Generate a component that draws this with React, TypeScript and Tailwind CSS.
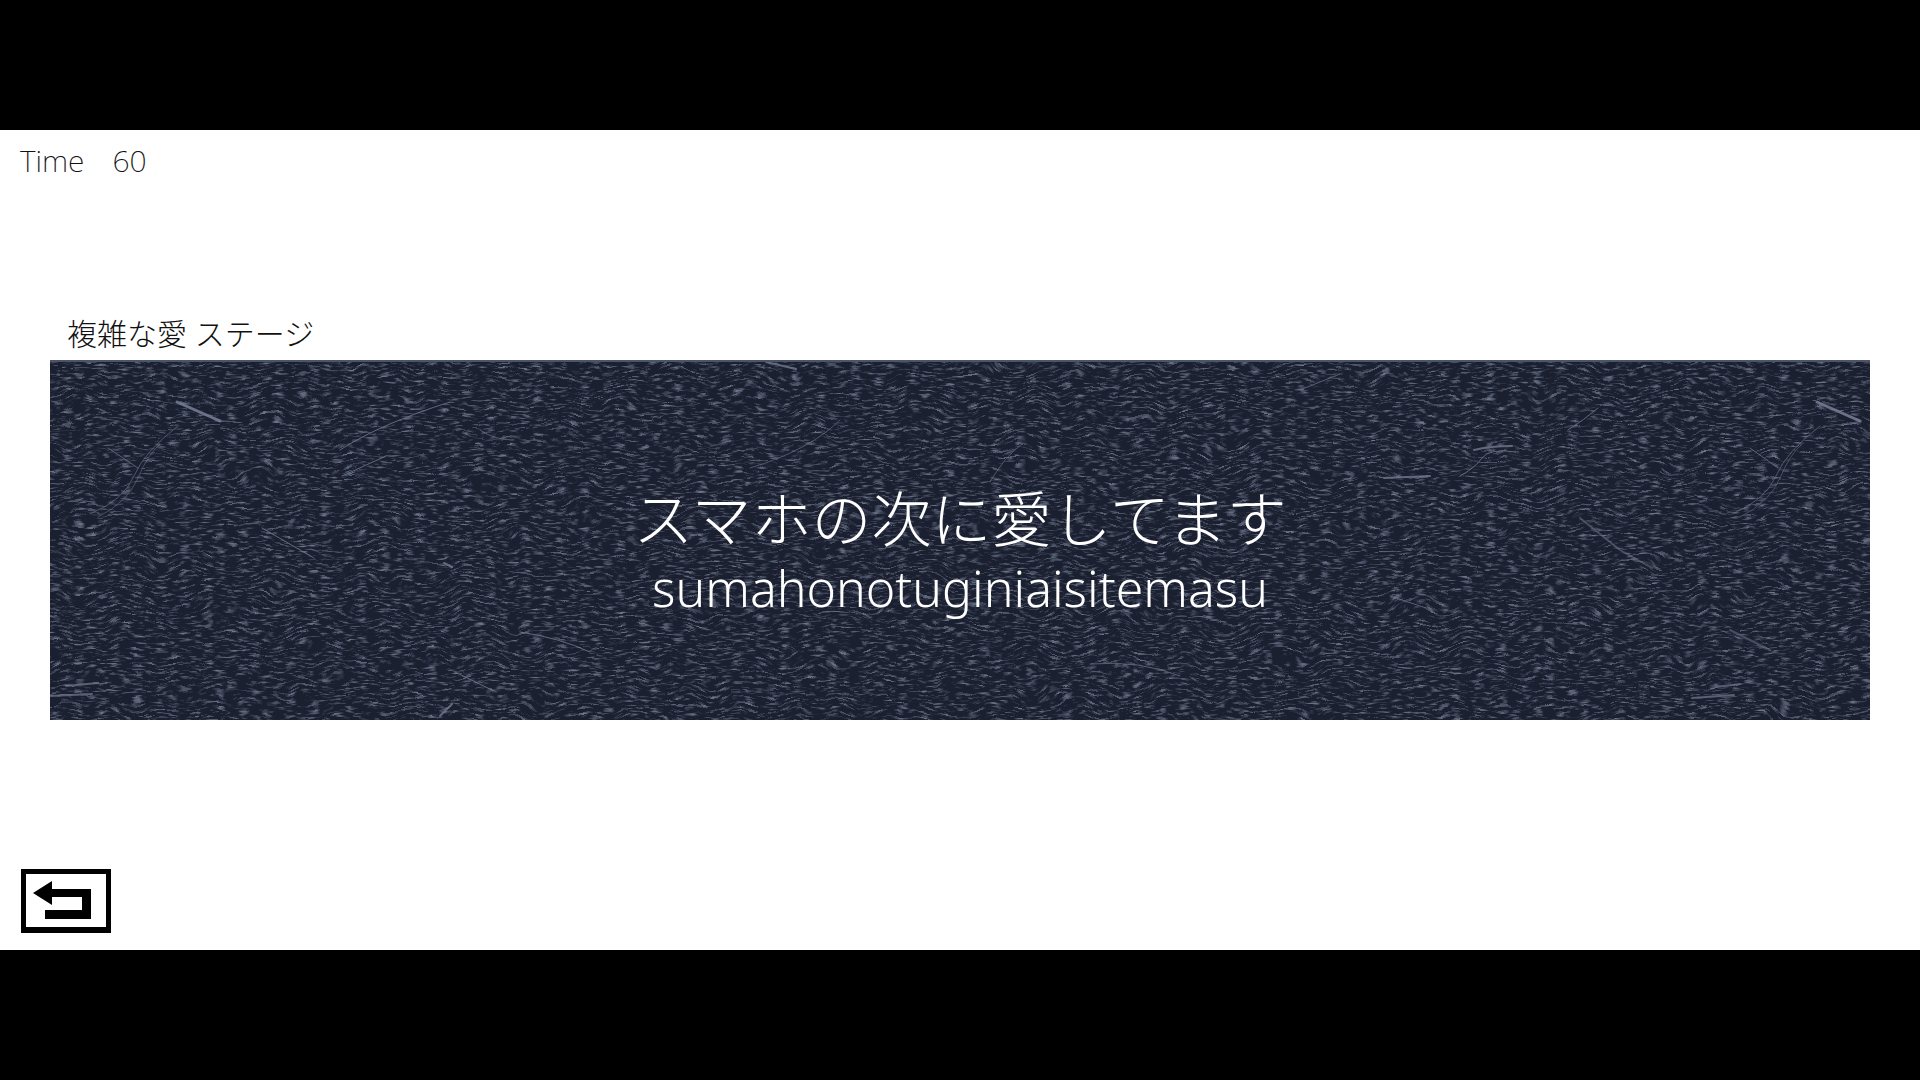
const FIBERS = [
  { d: "M127 42 L170 61 M1767 42 L1810 61", width: 3, opacity: 0.9 },
  { d: "M40 154 Q74 140 84 116 T128 66 M1682 154 Q1716 140 1726 116 T1770 66", width: 1, opacity: 0.6 },
  { d: "M48 157 Q78 142 88 118 T110 84 M1690 157 Q1720 142 1730 118 T1752 84", width: 1, opacity: 0.5 },
  { d: "M58 88 L88 108 M1700 88 L1728 108", width: 1, opacity: 0.7 },
  { d: "M290 90 Q330 64 400 42 M292 116 L336 96", width: 1, opacity: 0.8 },
  { d: "M1334 118 L1380 116 M1424 90 Q1440 86 1462 86", width: 2, opacity: 0.8 },
  { d: "M1410 116 Q1425 108 1432 98 T1466 92 M1518 70 Q1534 60 1548 48", width: 1, opacity: 0.8 },
  { d: "M1530 158 L1570 190 M1570 190 L1602 208 M1680 270 L1720 290", width: 2, opacity: 0.5 },
  { d: "M212 168 L264 198 M470 272 Q510 278 540 292 M405 312 L446 332", width: 1, opacity: 0.8 },
  { d: "M0 336 L42 334 M16 326 L48 323 M1642 338 L1684 335 M1666 327 L1690 324", width: 2, opacity: 0.7 },
  { d: "M390 356 L402 344 M394 203 L402 207 M716 2 L746 9", width: 2, opacity: 0.8 },
  { d: "M940 122 Q955 96 972 84 M790 60 Q760 90 700 108 M430 70 Q444 80 464 80", width: 1, opacity: 0.6 },
  { d: "M1040 304 Q1090 300 1130 316 M1340 236 L1376 248 M1250 30 L1290 14", width: 1, opacity: 0.7 },
];

function PaperTexture() {
  return (
    <svg className="absolute inset-0 h-full w-full" aria-hidden="true">
      <filter id="paper" x="0" y="0" width="100%" height="100%" colorInterpolationFilters="sRGB">
        <feTurbulence type="fractalNoise" baseFrequency="0.085 0.46" numOctaves={2} seed={4} result="grain" />
        <feTurbulence type="fractalNoise" baseFrequency="0.02 0.024" numOctaves={2} seed={11} />
        <feColorMatrix values="0 0 0 0 0.5  0 1 0 0 0  0 0 0 0 0.5  0 0 0 0 1" result="wave" />
        <feDisplacementMap in="grain" in2="wave" scale={24} xChannelSelector="R" yChannelSelector="G" result="bent" />
        <feColorMatrix in="bent" values="0 0 0 0 0.42  0 0 0 0 0.46  0 0 0 0 0.54  3 0 0 0 -1.5" />
      </filter>
      <rect y="-20" width="100%" height="120%" filter="url(#paper)" />
      <g fill="none" stroke="#737b92" strokeLinecap="round">
        {FIBERS.map((f) => (
          <path key={f.d} d={f.d} strokeWidth={f.width} opacity={f.opacity} />
        ))}
      </g>
      <rect width="100%" height="2" fill="#4b5568" />
    </svg>
  );
}

export default function App() {
  return (
    <div className="flex min-h-screen flex-col justify-center bg-black">
      <main className="flex aspect-[1920/820] w-full flex-col bg-white text-[#111111] [font-family:'Noto_Sans','Noto_Sans_CJK_JP',sans-serif]">
        <header className="flex gap-7 px-5 pt-3 text-[30px] leading-[38px] font-extralight">
          <span>Time</span>
          <span>60</span>
        </header>
        <section className="mt-32 px-[50px]">
          <h1 className="px-[17px] text-[30px] leading-[52px] font-extralight">複雑な愛 ステージ</h1>
          <div className="relative flex h-[360px] flex-col items-center justify-center overflow-hidden bg-[#1b2031] pt-[26px] font-light text-white">
            <PaperTexture />
            <p className="relative text-[60px] leading-[70px]">スマホの次に愛してます</p>
            <p className="relative text-[50px] leading-[68px]">sumahonotuginiaisitemasu</p>
          </div>
        </section>
        <footer className="mt-auto flex px-[21px] pb-[17px]">
          <button aria-label="戻る" className="bg-white">
            <svg className="block h-16 w-[90px]" viewBox="0 0 90 64" aria-hidden="true">
              <path fillRule="evenodd" d="M0 0H90V64H0ZM5 5V58H85V5Z" />
              <path d="M12 24L31 12V20H70V50H24V41H61V28H31V36Z" />
            </svg>
          </button>
        </footer>
      </main>
    </div>
  );
}
